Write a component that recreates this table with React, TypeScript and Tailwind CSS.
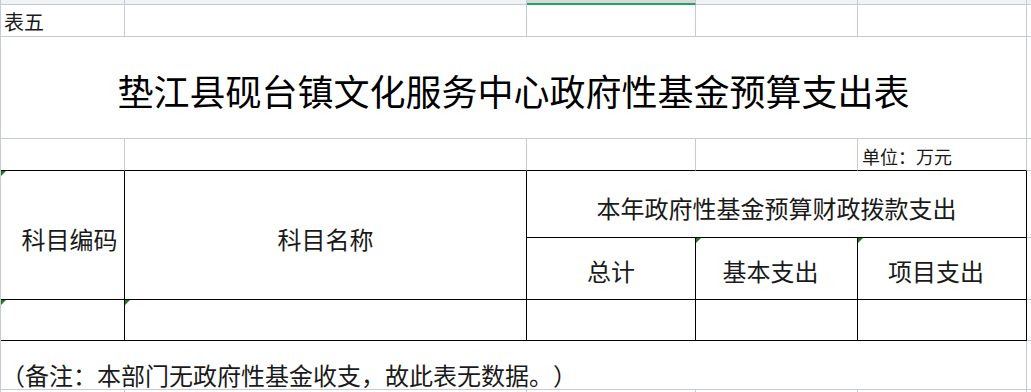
import React from "react";

const grid = "border-[#c5cad8]";

function Flag() {
  return (
    <span className="absolute left-0 top-0 h-0 w-0 border-t-[5px] border-r-[5px] border-t-[#1c7a1c] border-r-transparent" />
  );
}

export default function App() {
  return (
    <div
      className="grid h-[392px] w-[1031px] grid-cols-[124px_402px_169px_162px_169px_1fr] grid-rows-[5px_32px_102px_32px_67px_62px_41px_49px_1fr] overflow-hidden border-l border-[#c5cad8] bg-white text-[#1a1a1a] [text-spacing-trim:space-all]"
      style={{ fontFamily: '"Noto Sans CJK SC", "Noto Sans", sans-serif' }}
    >
      {/* column header strip */}
      <div className={`border-r border-b bg-[#f1f2f4] ${grid}`} />
      <div className={`border-r border-b bg-[#f1f2f4] ${grid}`} />
      <div className={`border-r border-b-2 border-b-[#1fa463] border-r-[#c5cad8] bg-[#d8d8d8]`} />
      <div className={`border-r border-b bg-[#f1f2f4] ${grid}`} />
      <div className={`border-r border-b bg-[#f1f2f4] ${grid}`} />
      <div className={`border-b bg-[#f1f2f4] ${grid}`} />

      {/* row: 表五 */}
      <div className={`flex items-center border-r border-b pl-[3px] pt-[3px] text-[20px] leading-none ${grid}`}>表五</div>
      <div className={`border-r border-b ${grid}`} />
      <div className={`border-r border-b ${grid}`} />
      <div className={`border-r border-b ${grid}`} />
      <div className={`border-r border-b ${grid}`} />
      <div className={`border-b ${grid}`} />

      {/* title */}
      <div className={`col-span-5 flex items-center justify-center border-r border-b pt-[5px] text-[36px] leading-none text-black ${grid}`}>
        垫江县砚台镇文化服务中心政府性基金预算支出表
      </div>
      <div className={`border-b ${grid}`} />

      {/* unit row */}
      <div className="border-r border-b border-r-[#c5cad8] border-b-black" />
      <div className="border-r border-b border-r-[#c5cad8] border-b-black" />
      <div className="border-r border-b border-r-[#c5cad8] border-b-black" />
      <div className="border-r border-b border-r-[#c5cad8] border-b-black" />
      <div className="flex items-end border-r border-b border-r-[#c5cad8] border-b-black pb-[5px] pl-[4px] text-[18px] leading-none">
        单位：万元
      </div>
      <div className={`border-b ${grid}`} />

      {/* header rows */}
      <div className="relative row-span-2 flex items-center justify-center border-r border-b border-black pl-[14px] pt-[8px] text-[24px] leading-none">
        <Flag />
        科目编码
      </div>
      <div className="row-span-2 flex items-center justify-center border-r border-b border-black pt-[8px] text-[24px] leading-none">
        科目名称
      </div>
      <div className="col-span-3 flex items-center justify-center border-r border-b border-black pt-[8px] text-[24px] leading-none">
        本年政府性基金预算财政拨款支出
      </div>
      <div className={`border-b ${grid}`} />

      <div className="flex items-center justify-center border-r border-b border-black pt-[4px] text-[24px] leading-none">
        总计
      </div>
      <div className="relative flex items-center justify-center border-r border-b border-black pr-[12px] pt-[4px] text-[24px] leading-none">
        <Flag />
        基本支出
      </div>
      <div className="relative flex items-center justify-center border-r border-b border-black pr-[12px] pt-[4px] text-[24px] leading-none">
        <Flag />
        项目支出
      </div>
      <div className={`border-b ${grid}`} />

      {/* empty data row */}
      <div className="relative border-r border-b border-black">
        <Flag />
      </div>
      <div className="relative border-r border-b border-black">
        <Flag />
      </div>
      <div className="border-r border-b border-black" />
      <div className="border-r border-b border-black" />
      <div className="border-r border-b border-black" />
      <div className={`border-b ${grid}`} />

      {/* remark */}
      <div className={`col-span-5 flex items-end border-r border-b pb-[2px] text-[24px] leading-none ${grid}`}>
        （备注：本部门无政府性基金收支，故此表无数据。）
      </div>
      <div className={`border-b ${grid}`} />

      {/* next row, mostly cut off */}
      <div className={`border-r ${grid}`} />
      <div className={`border-r ${grid}`} />
      <div className={`border-r ${grid}`} />
      <div className={`border-r ${grid}`} />
      <div className={`border-r ${grid}`} />
      <div />
    </div>
  );
}
